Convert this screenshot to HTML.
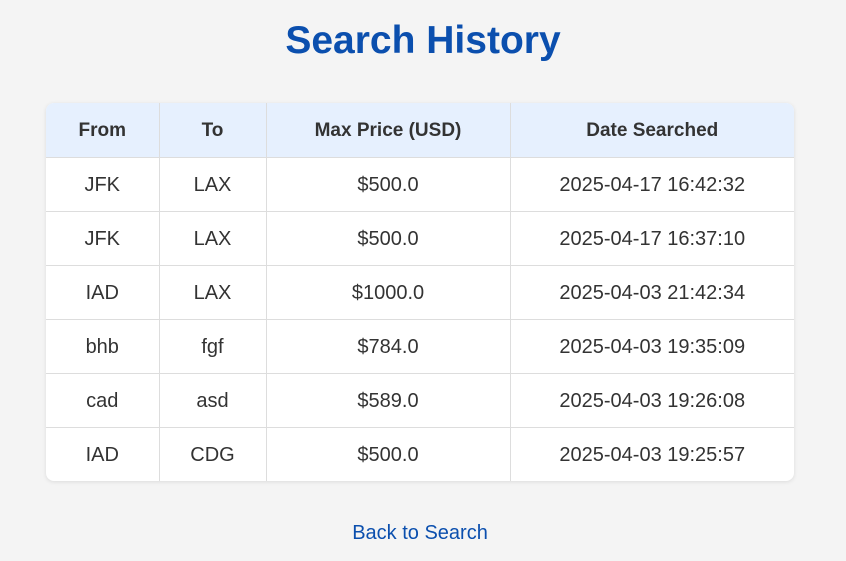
<!DOCTYPE html>
<html><head><meta charset="utf-8"><style>
body{margin:0;background:#f4f4f4;font-family:"Liberation Sans",Arial,sans-serif;width:846px;height:561px;overflow:hidden}
h1{margin:0;position:absolute;top:19px;left:0;width:846px;text-align:center;font-size:39px;color:#0b4fae;font-weight:bold;line-height:44px}
.wrap{position:absolute;left:46px;top:103px;width:748px;height:378px;border-radius:8px;overflow:hidden;background:#fff;box-shadow:0 1px 4px rgba(0,0,0,0.1)}
table{border-collapse:collapse;width:748px;table-layout:fixed}
tr{height:54px}
td,th{border:1px solid #ddd;text-align:center;font-size:20px;color:#333;padding:3px 0 0 0}
th{background:#e6f0fe;font-weight:bold;font-size:19px}
tr:first-child th{border-top:none}
tr td:first-child,tr th:first-child{border-left:none}
tr td:last-child,tr th:last-child{border-right:none}
tr:last-child td{border-bottom:none}
a{position:absolute;top:522px;left:-3px;width:846px;text-align:center;color:#0b4fae;font-size:20px;text-decoration:none}
</style></head><body>
<h1>Search History</h1>
<div class="wrap"><table>
<colgroup><col style="width:113px"><col style="width:107px"><col style="width:244px"><col style="width:284px"></colgroup>
<tr><th>From</th><th>To</th><th>Max Price (USD)</th><th>Date Searched</th></tr>
<tr><td>JFK</td><td>LAX</td><td>$500.0</td><td>2025-04-17 16:42:32</td></tr>
<tr><td>JFK</td><td>LAX</td><td>$500.0</td><td>2025-04-17 16:37:10</td></tr>
<tr><td>IAD</td><td>LAX</td><td>$1000.0</td><td>2025-04-03 21:42:34</td></tr>
<tr><td>bhb</td><td>fgf</td><td>$784.0</td><td>2025-04-03 19:35:09</td></tr>
<tr><td>cad</td><td>asd</td><td>$589.0</td><td>2025-04-03 19:26:08</td></tr>
<tr><td>IAD</td><td>CDG</td><td>$500.0</td><td>2025-04-03 19:25:57</td></tr>
</table></div>
<a>Back to Search</a>
</body></html>
